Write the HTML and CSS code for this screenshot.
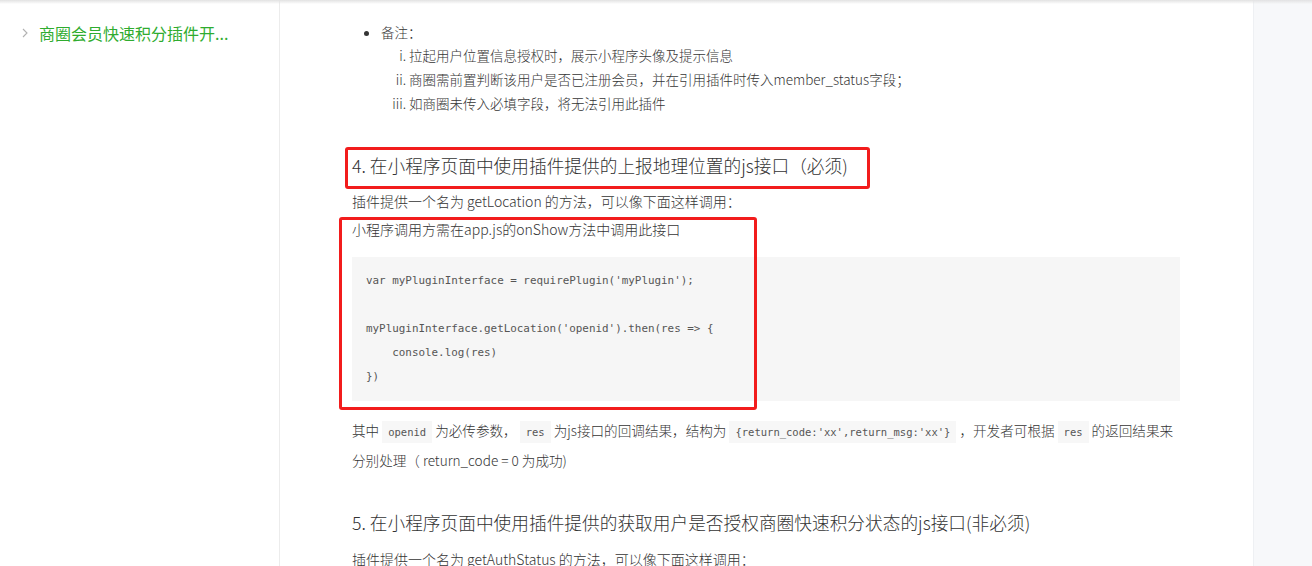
FILE: index.html
```html
<!DOCTYPE html>
<html lang="zh-CN">
<head>
    <meta charset="UTF-8">
    <title>商圈会员快速积分插件开发文档</title>
    <link rel="stylesheet" href="styles.css">
</head>
<body>
    <div class="topline"></div>
    <div class="page">
        <aside class="sidebar">
            <div class="nav-item">
                <span class="nav-arrow">
                    <svg width="6" height="10" viewBox="0 0 6 10"><path d="M1 1l4 4-4 4" fill="none" stroke="#b2b2b2" stroke-width="1.1"/></svg>
                </span>
                <span class="nav-text">商圈会员快速积分插件开...</span>
            </div>
        </aside>

        <main class="main">
            <div class="content">
                <ul class="notes">
                    <li>备注：
                        <ol>
                            <li>拉起用户位置信息授权时，展示小程序头像及提示信息</li>
                            <li>商圈需前置判断该用户是否已注册会员，并在引用插件时传入member_status字段；</li>
                            <li>如商圈未传入必填字段，将无法引用此插件</li>
                        </ol>
                    </li>
                </ul>

                <h3 class="h4">4. 在小程序页面中使用插件提供的上报地理位置的js接口（必须)</h3>
                <p>插件提供一个名为 getLocation 的方法，可以像下面这样调用：</p>
                <p>小程序调用方需在app.js的onShow方法中调用此接口</p>
<pre class="code">var myPluginInterface = requirePlugin('myPlugin');

myPluginInterface.getLocation('openid').then(res => {
    console.log(res)
})</pre>
                <p class="desc">其中 <code>openid</code> 为必传参数， <code>res</code> 为js接口的回调结果，结构为 <code>{return_code:'xx',return_msg:'xx'}</code> ，开发者可根据 <code>res</code> 的返回结果来<br>分别处理（ return_code = 0 为成功)</p>

                <h3 class="h5">5. 在小程序页面中使用插件提供的获取用户是否授权商圈快速积分状态的js接口(非必须)</h3>
                <p class="last">插件提供一个名为 getAuthStatus 的方法，可以像下面这样调用：</p>
            </div>

            <div class="mark mark-title"></div>
            <div class="mark mark-code"></div>
        </main>

        <div class="aside"></div>
    </div>
</body>
</html>
```

FILE: styles.css
```css
* {
    margin: 0;
    padding: 0;
    box-sizing: border-box;
}

html, body {
    height: 100%;
    overflow: hidden;
}

body {
    font-family: "Noto Sans CJK SC", "Noto Sans", sans-serif;
    font-weight: 300;
    color: #353535;
    background: #fff;
}

.topline {
    position: fixed;
    top: 0;
    left: 0;
    right: 0;
    height: 4px;
    background: linear-gradient(#e2e2e2, rgba(255, 255, 255, 0));
    z-index: 5;
}

.page {
    display: flex;
    height: 100%;
}

.sidebar {
    width: 280px;
    flex: none;
    border-right: 1px solid #ececec;
    padding-top: 22px;
}

.nav-item {
    display: flex;
    align-items: center;
    height: 22px;
    padding-left: 22px;
}

.nav-arrow {
    width: 17px;
    display: flex;
    align-items: center;
}

.nav-text {
    font-size: 16px;
    font-weight: 400;
    color: #2fac2f;
    line-height: 22px;
}

.main {
    flex: 1;
    position: relative;
    overflow: hidden;
}

.content {
    padding: 20px 73px 0 72px;
    font-size: 14px;
}

.notes {
    padding-left: 29px;
    line-height: 24px;
    font-size: 13.5px;
}

.notes ol {
    list-style: lower-roman;
    padding-left: 28px;
    margin-top: -1px;
}

.h4, .h5 {
    font-size: 17.7px;
    font-weight: 300;
    color: #333;
    line-height: 28px;
}

.h4 {
    margin-top: 36px;
    margin-bottom: 8px;
}

p {
    line-height: 28px;
}

.code {
    margin-top: 14px;
    background: #f6f6f6;
    padding: 12px 14px;
    font-family: "DejaVu Sans Mono", "Liberation Mono", monospace;
    font-size: 10.9px;
    line-height: 24px;
    color: #555;
}

.desc {
    margin-top: 15px;
    font-size: 13.6px;
}

.desc code {
    font-family: "DejaVu Sans Mono", "Liberation Mono", monospace;
    font-size: 10.5px;
    background: #f7f7f7;
    color: #555;
    padding: 5px 6px;
}

.h5 {
    margin-top: 34px;
}

.last {
    margin-top: 9px;
}

.mark {
    position: absolute;
    border: 3px solid #f21c1c;
    border-radius: 3px;
}

.mark-title {
    left: 65px;
    top: 147px;
    width: 525px;
    height: 42px;
}

.mark-code {
    left: 59px;
    top: 217px;
    width: 418px;
    height: 193px;
}

.aside {
    width: 59px;
    flex: none;
    background: #f7f8fa;
    border-left: 1px solid #eef0f3;
}
```
